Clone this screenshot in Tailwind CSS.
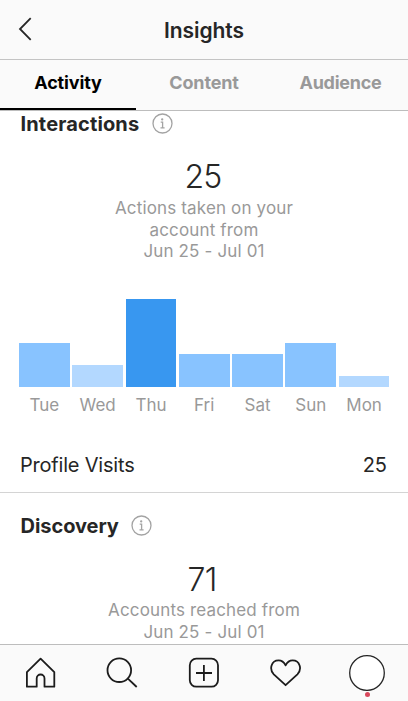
<!DOCTYPE html>
<html lang="en">
<head>
  <meta charset="UTF-8" />
  <meta name="viewport" content="width=device-width, initial-scale=1.0" />
  <title>Insights</title>
  <script src="https://cdn.jsdelivr.net/npm/@tailwindcss/browser@4"></script>
</head>
<body class="font-['Inter',sans-serif] bg-white text-[#262626] flex flex-col h-screen overflow-hidden">

  <header class="h-[60px] shrink-0 bg-[#fafafa] border-b border-[#c4c4c4] grid grid-cols-[1fr_auto_1fr] items-center pt-[3px]">
    <a href="#" aria-label="Back" class="pl-[18px] -mt-[5px]">
      <svg class="w-[14px] h-6" viewBox="0 0 14 24" fill="none" stroke="#262626" stroke-width="1.8"><path d="M12.7 1.2 2 12l10.7 10.8" /></svg>
    </a>
    <h1 class="text-[21px] font-semibold tracking-[-0.05px]">Insights</h1>
  </header>

  <!-- Tabs -->
  <div class="h-[51px] shrink-0 bg-[#fafafa] border-b border-[#bdbdbd] grid grid-cols-3 text-center text-[18px] leading-[46px] font-bold tracking-[-0.15px] text-[#999]">
    <a href="#" class="text-black border-b-2 border-black h-[50px]">Activity</a>
    <a href="#">Content</a>
    <a href="#" class="tracking-[-0.25px] pl-px">Audience</a>
  </div>

  <main class="grow min-h-0 overflow-hidden">
    <section class="border-b border-[#d4d4d4] h-[382px]">
      <div class="flex items-center gap-[13px] pl-[20.5px] h-[25px]">
        <h2 class="text-[20px] font-bold tracking-[0.15px]">Interactions</h2>
        <svg class="w-[21px] h-[21px]" viewBox="0 0 21 21" fill="none" stroke="#a3a3a3" stroke-width="1.3"><circle cx="10.5" cy="10.5" r="9.5" /><path d="M8.7 9.2h1.9v5.4M8.5 14.8h4.1" /><circle cx="10.2" cy="6.4" r=".5" fill="#a3a3a3" /></svg>
      </div>
      <div class="pt-5 text-center">
        <div class="text-[32px] leading-[42px] font-light tracking-[-0.8px] pr-[2px]">25</div>
        <p class="text-[17px] leading-[21.5px] tracking-[0.15px] text-[#999]">Actions taken on your<br>account from<br>Jun 25 - Jul 01</p>
      </div>

      <!-- Chart -->
      <div class="mt-[36px] ml-[19px] mr-[18.5px] grid grid-cols-7 gap-x-[2.5px] items-end">
        <div class="h-11 bg-[#88c3ff]"></div>
        <div class="h-[22px] bg-[#b3d8ff]"></div>
        <div class="h-[88px] bg-[#3897f0]"></div>
        <div class="h-[33px] bg-[#88c3ff]"></div>
        <div class="h-[33px] bg-[#88c3ff]"></div>
        <div class="h-11 bg-[#88c3ff]"></div>
        <div class="h-[11px] bg-[#b3d8ff]"></div>
      </div>
      <div class="mt-2 ml-[19px] mr-[18.5px] grid grid-cols-7 gap-x-[2.5px] text-center text-[17px] leading-5 text-[#999]">
        <span>Tue</span>
        <span>Wed</span>
        <span>Thu</span>
        <span>Fri</span>
        <span>Sat</span>
        <span>Sun</span>
        <span>Mon</span>
      </div>

      <div class="mt-[35px] pl-5 pr-[21px] flex justify-between text-[20px] leading-[30px]">
        <span class="tracking-[-0.2px]">Profile Visits</span>
        <span>25</span>
      </div>
    </section>

    <section>
      <div class="flex items-center gap-3 pl-[20.5px] pt-5 h-[45px]">
        <h2 class="text-[20px] font-bold tracking-[-0.05px]">Discovery</h2>
        <svg class="w-[21px] h-[21px]" viewBox="0 0 21 21" fill="none" stroke="#a3a3a3" stroke-width="1.3"><circle cx="10.5" cy="10.5" r="9.5" /><path d="M8.7 9.2h1.9v5.4M8.5 14.8h4.1" /><circle cx="10.2" cy="6.4" r=".5" fill="#a3a3a3" /></svg>
      </div>
      <div class="pt-[21px] text-center">
        <div class="text-[32px] leading-[41px] font-light tracking-[-0.8px] pr-[4px]">71</div>
        <p class="text-[17px] leading-[21.5px] tracking-[0.15px] text-[#999]">Accounts reached from<br>Jun 25 - Jul 01</p>
      </div>
    </section>
  </main>

  <!-- Bottom nav -->
  <nav class="h-[57px] shrink-0 bg-[#fafafa] border-t border-[#bdbdbd] grid grid-cols-5 items-center justify-items-center">
    <a href="#" aria-label="Home">
      <svg class="w-8 h-8" viewBox="0 0 32 32" fill="none" stroke="#1c1c1c" stroke-width="1.8" stroke-linejoin="round"><path d="M15.6 1.6 1.9 15.2v14.5h9.8v-8.3a3.9 3.9 0 0 1 7.8 0v8.3h9.8V15.2z" /></svg>
    </a>
    <a href="#" aria-label="Search">
      <svg class="w-8 h-8" viewBox="0 0 32 32" fill="none" stroke="#1c1c1c" stroke-width="1.8"><circle cx="13.3" cy="13.2" r="11.8" /><path d="m21.9 21.6 8.8 8.4" /></svg>
    </a>
    <a href="#" aria-label="New post">
      <svg class="w-8 h-8" viewBox="0 0 32 32" fill="none" stroke="#1c1c1c" stroke-width="1.8"><rect x="1.8" y="1.7" width="28.2" height="28" rx="6.5" /><path d="M15.9 8v16M8 16h16" /></svg>
    </a>
    <a href="#" aria-label="Activity">
      <svg class="w-8 h-8" viewBox="0 0 32 32" fill="none" stroke="#1c1c1c" stroke-width="1.8" stroke-linejoin="round"><path d="M15.6 28.2 3.8 17.3C-1.1 12.3 1.2 3.4 8.6 3.4c3.3 0 5.4 1.8 7 5 1.6-3.2 3.7-5 7-5 7.4 0 9.7 8.9 4.8 13.9z" /></svg>
    </a>
    <a href="#" aria-label="Profile" class="relative">
      <svg class="w-9 h-9" viewBox="0 0 36 36" fill="#fff" stroke="#262626" stroke-width="1.3"><circle cx="18" cy="18" r="17.3" /></svg>
      <span class="absolute left-[15.5px] top-[36.5px] w-[5px] h-[5px] rounded-full bg-[#d9485c]"></span>
    </a>
  </nav>

</body>
</html>
